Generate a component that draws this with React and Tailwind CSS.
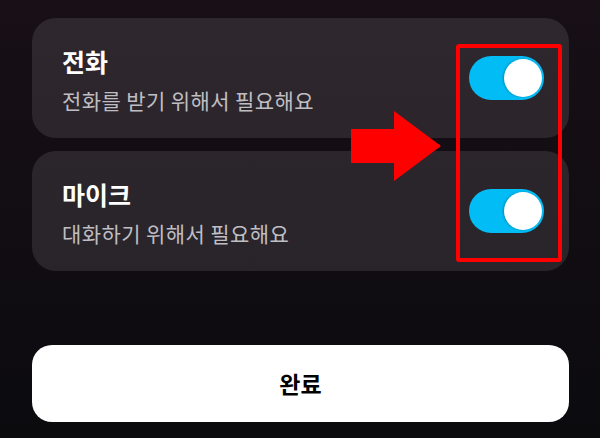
function Toggle() {
  return (
    <div className="flex h-[44px] w-[75px] shrink-0 items-center justify-end rounded-full bg-[#02bcf5] pr-[2px]">
      <div className="h-[38px] w-[38px] rounded-full bg-white shadow-[-1px_0_2px_rgba(0,0,0,0.25)]" />
    </div>
  )
}

function PermissionCard({ title, desc }) {
  return (
    <div className="flex h-[120px] items-center justify-between rounded-[24px] bg-white/10 pl-[30px] pr-[25px]">
      <div className="flex flex-col gap-[12px] pt-[2px]">
        <span className="text-[25px] font-bold leading-[30px] text-white">{title}</span>
        <span className="text-[21px] leading-[24px] tracking-[0.4px] text-[#bfbec3]">{desc}</span>
      </div>
      <Toggle />
    </div>
  )
}

export default function App() {
  return (
    <div
      className="relative flex h-[438px] w-[600px] flex-col overflow-hidden bg-linear-to-b from-[#180f17] to-[#0b0b0e] pl-[32px] pr-[31px] pt-[18px]"
      style={{ fontFamily: '"Noto Sans CJK KR", "Noto Sans", sans-serif' }}
    >
      {/* 권한 카드 */}
      <div className="flex flex-col gap-[13px]">
        <PermissionCard title="전화" desc="전화를 받기 위해서 필요해요" />
        <PermissionCard title="마이크" desc="대화하기 위해서 필요해요" />
      </div>

      {/* 완료 버튼 */}
      <button className="mt-[74px] flex h-[77px] items-center justify-center rounded-[20px] bg-white text-[23px] font-semibold text-black">
        완료
      </button>

      {/* 강조 표시 */}
      <div className="absolute left-[456px] top-[44px] h-[218px] w-[106px] rounded-[3px] border-4 border-[#ff0000]" />
      <svg className="absolute left-[351px] top-[111px]" width="90" height="70" viewBox="0 0 90 70">
        <polygon points="0,18 43,18 43,0 90,35 43,70 43,52 0,52" fill="#ff0000" />
      </svg>
    </div>
  )
}
